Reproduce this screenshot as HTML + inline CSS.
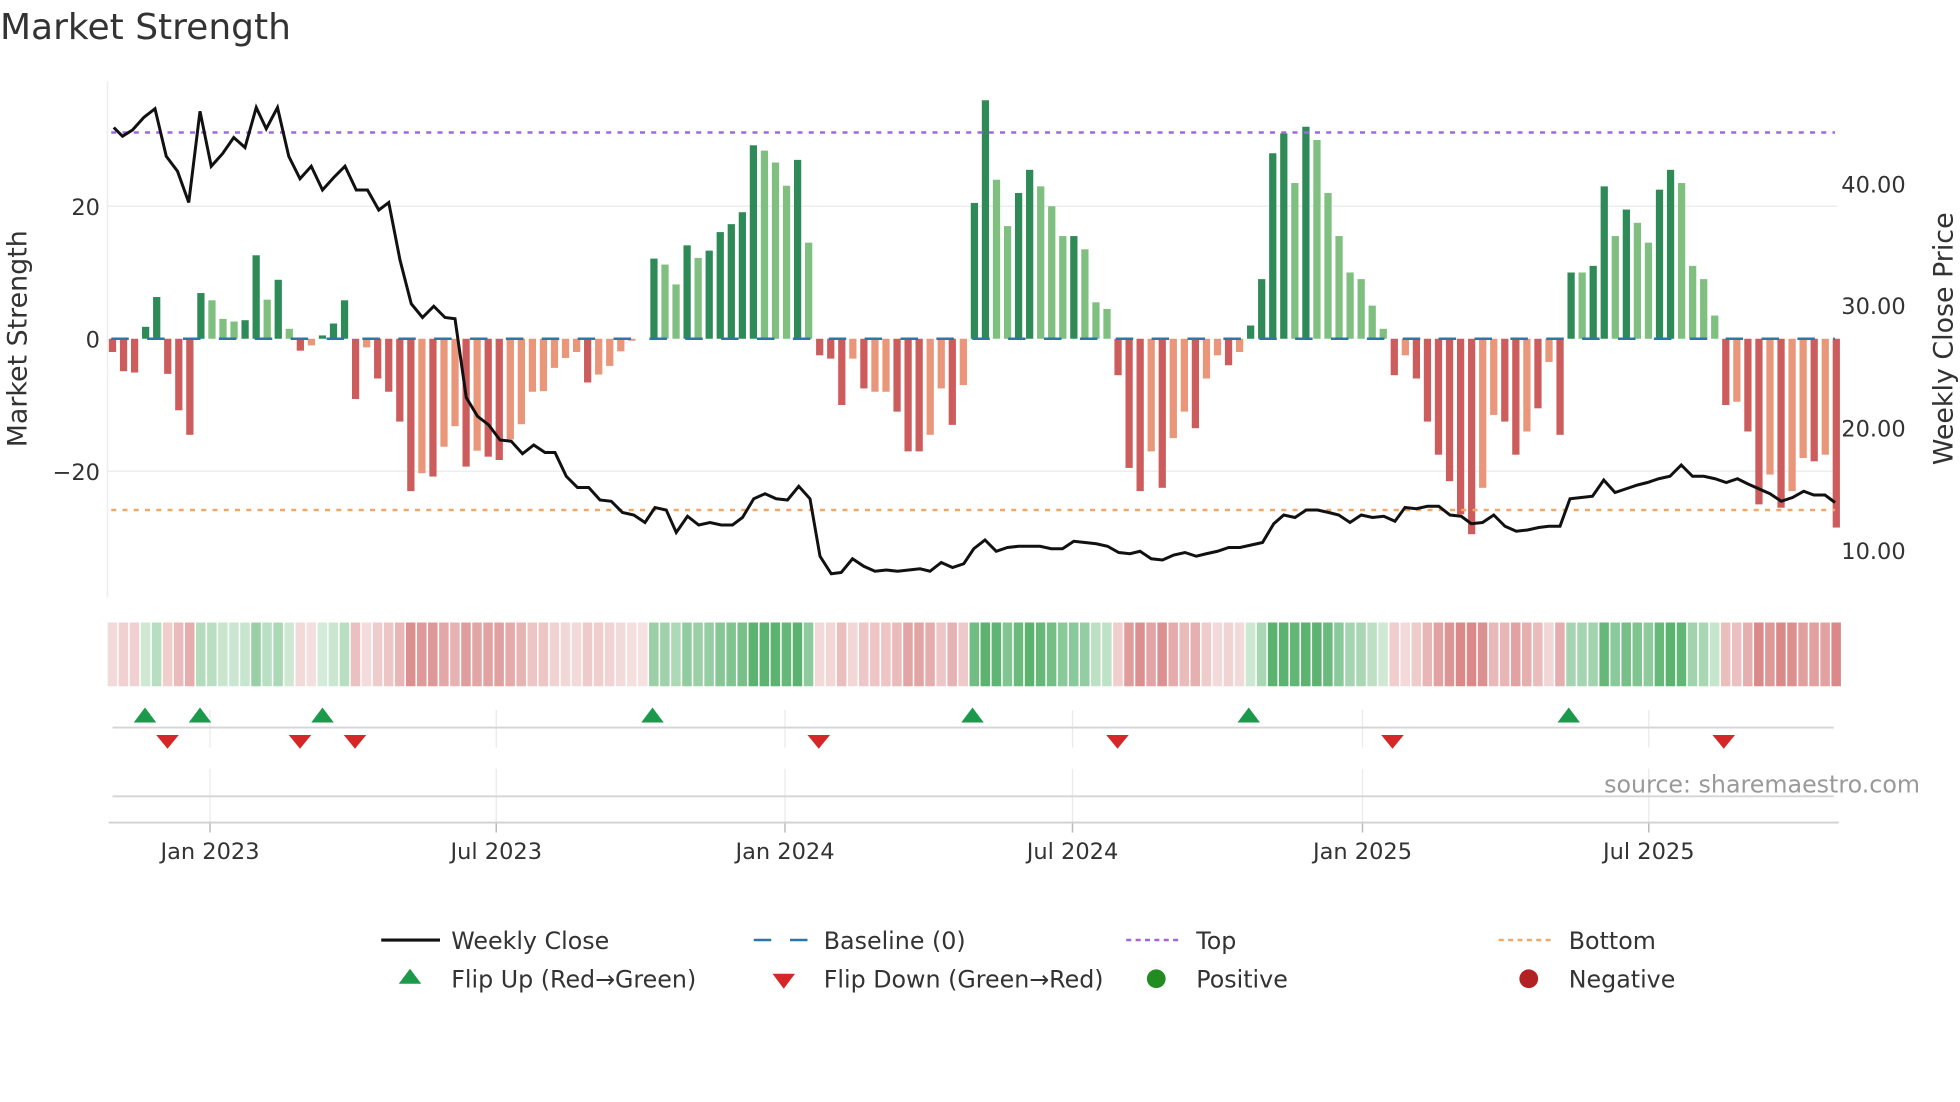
<!DOCTYPE html>
<html><head><meta charset="utf-8"><style>
html,body{margin:0;padding:0;background:#fff;width:1960px;height:1102px;overflow:hidden}
svg{display:block}
text{font-family:"DejaVu Sans","Liberation Sans",sans-serif;fill:#333}
</style></head><body>
<svg id="s" width="1960" height="1102" viewBox="0 0 1568 881.6" xmlns="http://www.w3.org/2000/svg">
<rect width="1568" height="882" fill="#fff"/>
<text x="0" y="31" font-size="28.8">Market Strength</text>
<g id="grid"></g>
<g id="bars"></g>
<g id="over"></g>
<text x="80" y="172" font-size="18" text-anchor="end">20</text>
<text x="80" y="278" font-size="18" text-anchor="end">0</text>
<text x="80" y="384" font-size="18" text-anchor="end">−20</text>
<text x="1473" y="154" font-size="18">40.00</text>
<text x="1473" y="251" font-size="18">30.00</text>
<text x="1473" y="349" font-size="18">20.00</text>
<text x="1473" y="447" font-size="18">10.00</text>
<text transform="translate(21,271) rotate(-90)" font-size="21.5" text-anchor="middle">Market Strength</text>
<text transform="translate(1562,271) rotate(-90)" font-size="21.5" text-anchor="middle">Weekly Close Price</text>
<text x="1536" y="634" font-size="19" text-anchor="end" style="fill:#999">source: sharemaestro.com</text>
<g font-size="18">
<text x="168" y="687" text-anchor="middle">Jan 2023</text>
<text x="397" y="687" text-anchor="middle">Jul 2023</text>
<text x="628" y="687" text-anchor="middle">Jan 2024</text>
<text x="858" y="687" text-anchor="middle">Jul 2024</text>
<text x="1090" y="687" text-anchor="middle">Jan 2025</text>
<text x="1319" y="687" text-anchor="middle">Jul 2025</text>
</g>
<g font-size="19">
<line x1="305" y1="752" x2="352" y2="752" stroke="#111" stroke-width="2.5"/>
<text x="361" y="759">Weekly Close</text>
<line x1="603" y1="752" x2="646" y2="752" stroke="#2a77a8" stroke-width="2" stroke-dasharray="14 15"/>
<text x="659" y="759">Baseline (0)</text>
<line x1="901" y1="752" x2="945" y2="752" stroke="#a066e0" stroke-width="2" stroke-dasharray="4 3.5"/>
<text x="957" y="759">Top</text>
<line x1="1199" y1="752" x2="1243" y2="752" stroke="#f0a868" stroke-width="2" stroke-dasharray="4 3.5"/>
<text x="1255" y="759">Bottom</text>
<polygon points="328,775 337,787 319,787" fill="#1a9a4a"/>
<text x="361" y="790">Flip Up (Red→Green)</text>
<polygon points="618,779 636,779 627,791" fill="#d62728"/>
<text x="659" y="790">Flip Down (Green→Red)</text>
<circle cx="925" cy="783" r="7.5" fill="#228b22"/>
<text x="957" y="790">Positive</text>
<circle cx="1223" cy="783" r="7.5" fill="#b22222"/>
<text x="1255" y="790">Negative</text>
</g>
</svg>
<script>
var NS="http://www.w3.org/2000/svg";
function el(p,t,a){var e=document.createElementNS(NS,t);for(var k in a)e.setAttribute(k,a[k]);p.appendChild(e);return e;}
var V="R-2 R-4.9 R-5.1 D1.8 D6.3 R-5.3 R-10.8 R-14.5 D6.9 L5.8 L3 L2.6 D2.8 D12.6 L5.9 D8.9 L1.5 R-1.8 O-1 D0.5 D2.3 D5.8 R-9.1 O-1.3 R-6 R-8 R-12.5 R-23 O-20.3 R-20.8 O-16.3 O-13.2 R-19.3 O-16.9 R-17.8 R-18.3 O-15.2 O-12.9 O-8 O-7.9 O-4.4 O-2.9 O-2 R-6.6 O-5.4 O-4.1 O-1.9 O-0.3 O0 D12.1 L11.2 L8.2 D14.1 L12.2 D13.3 D16.1 D17.3 D19.1 D29.2 L28.4 L26.6 L23.1 D27 L14.5 R-2.5 R-3 R-10 O-3 R-7.5 O-8 O-8 R-11 R-17 R-17 O-14.5 O-7.5 R-13 O-7 D20.5 D36 L24 L17 D22 D25.5 L23 L20 L15.5 D15.5 L13.5 L5.5 L4.5 R-5.5 R-19.5 R-23 O-17 R-22.5 O-15 O-11 R-13.5 O-6 O-2.5 R-4 O-2 D2 D9 D28 D31 L23.5 D32 L30 L22 L15.5 L10 L9 L5 L1.5 R-5.5 O-2.5 R-6 R-12.5 R-17.5 R-21.5 R-26.5 R-29.5 O-22.5 O-11.5 R-12.5 R-17.5 O-14 R-10.5 O-3.5 R-14.5 D10 L10 D11 D23 L15.5 D19.5 L17.5 L14.5 D22.5 D25.5 L23.5 L11 L9 L3.5 R-10 O-9.5 R-14 R-25 O-20.5 R-25.5 O-23 O-18 R-18.5 O-17.5 R-28.5".split(" ");
var C={D:"#2e8b57",L:"#7fbf7f",R:"#cd5c5c",O:"#e9967a"};
var g=document.getElementById("grid"),b=document.getElementById("bars"),o=document.getElementById("over");
el(g,"line",{x1:86,y1:165,x2:1470,y2:165,stroke:"#eee","stroke-width":1.2});
el(g,"line",{x1:86,y1:377,x2:1470,y2:377,stroke:"#eee","stroke-width":1.2});
el(g,"line",{x1:86,y1:65,x2:86,y2:478,stroke:"#eee","stroke-width":1.2});
[168,397,628,858,1090,1319].forEach(function(x){
 el(g,"line",{x1:x,y1:568,x2:x,y2:598,stroke:"#eaeaee","stroke-width":1});
 el(g,"line",{x1:x,y1:615,x2:x,y2:658,stroke:"#eaeaee","stroke-width":1});
 el(g,"line",{x1:x,y1:658,x2:x,y2:666,stroke:"#bbb","stroke-width":1.2});
});
el(g,"line",{x1:90,y1:582,x2:1467,y2:582,stroke:"#d5d5d5","stroke-width":1.5});
el(g,"line",{x1:90,y1:637,x2:1467,y2:637,stroke:"#d5d5d5","stroke-width":1.5});
el(g,"line",{x1:87,y1:658,x2:1471,y2:658,stroke:"#d0d0d0","stroke-width":1.5});
var P=8.84,X0=90,Z=271,U=5.3;
V.forEach(function(s,i){
 var t=s[0],v=parseFloat(s.slice(1)),x=X0+P*i;
 var h=Math.abs(v)*U; if(h<0.5)h=0;
 if(h>0) el(b,"rect",{x:x-2.9,y:v>0?Z-h:Z,width:5.8,height:h,fill:C[t]});
 var a=0.2+0.6*Math.min(1,Math.abs(v)/25);
 var col=v>0?"rgba(50,160,75,"+a.toFixed(2)+")":"rgba(200,80,80,"+(a*0.85).toFixed(2)+")";
 el(b,"rect",{x:x-3.9,y:498,width:7.6,height:51,fill:col});
});
el(o,"line",{x1:89,y1:271,x2:1468,y2:271,stroke:"#2a77a8","stroke-width":2,"stroke-dasharray":"14 14.7"});
el(o,"line",{x1:89,y1:106,x2:1468,y2:106,stroke:"#a066e0","stroke-width":2,"stroke-dasharray":"4 5"});
el(o,"line",{x1:89,y1:408,x2:1468,y2:408,stroke:"#f0a868","stroke-width":2,"stroke-dasharray":"4 5"});
var pts="91,102 98,109 106,104 115,94 124,87 133,125 142,137 151,162 160,89 169,133 178,123 187,110 196,118 205,86 213,103 222,86 231,125 240,143 249,133 258,152 267,142 276,133 285,152 294,152 303,168 311,162 320,208 329,243 338,254 347,245 356,254 364,255 373,318 382,333 391,340 400,352 409,353 418,363 427,356 436,362 444,362 453,381 462,390 471,390 480,400 489,401 498,410 507,412 516,418 524,406 533,408 541,426 550,413 559,420 568,418 577,420 586,420 594,414 603,399 612,395 621,399 630,400 639,389 648,399 656,445 665,459 673,458 682,447 691,453 700,457 709,456 718,457 727,456 736,455 744,457 753,450 762,454 771,451 779,439 788,432 797,441 806,438 815,437 824,437 832,437 841,439 850,439 859,433 868,434 877,435 886,437 895,442 904,443 912,441 921,447 930,448 939,444 948,442 957,445 965,443 974,441 983,438 992,438 1001,436 1010,434 1019,419 1027,412 1036,414 1045,408 1054,408 1063,410 1071,412 1080,418 1089,412 1098,414 1107,413 1116,417 1124,406 1133,407 1142,405 1151,405 1160,412 1169,413 1177,419 1186,418 1195,412 1204,421 1213,425 1222,424 1231,422 1239,421 1248,421 1256,399 1265,398 1274,397 1283,384 1292,394 1301,391 1310,388 1318,386 1327,383 1336,381 1345,372 1354,381 1363,381 1372,383 1381,386 1390,383 1398,387 1407,391 1416,395 1425,401 1434,398 1443,393 1451,396 1460,396 1468,402";
el(o,"polyline",{points:pts,fill:"none",stroke:"#111","stroke-width":2.4,"stroke-linejoin":"miter"});
[116,160,258,522,778,999,1255].forEach(function(x){el(o,"polygon",{points:(x)+",566 "+(x+9)+",578 "+(x-9)+",578",fill:"#1a9a4a"});});
[134,240,284,655,894,1114,1379].forEach(function(x){el(o,"polygon",{points:(x-9)+",588 "+(x+9)+",588 "+x+",599",fill:"#d62728"});});
</script>
</body></html>
